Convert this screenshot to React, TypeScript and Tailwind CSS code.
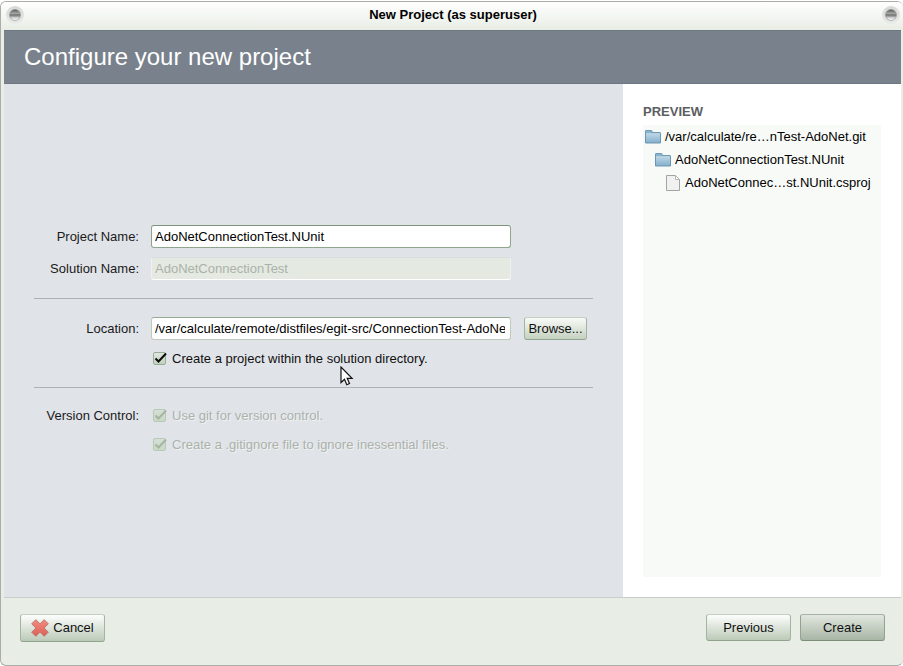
import React, { useState } from "react";

function WindowKnob({ label }: { label: string }) {
  return (
    <button type="button" aria-label={label} className="size-[18px] shrink-0">
      <svg viewBox="0 0 18 18" className="size-[18px]" aria-hidden="true">
        <defs>
          <linearGradient id="knob" x1="0" y1="0" x2="0" y2="1">
            <stop offset="0" stopColor="#4a4a4a" />
            <stop offset="0.2" stopColor="#858585" />
            <stop offset="0.4" stopColor="#a8a8a8" />
            <stop offset="0.48" stopColor="#6e6e6e" />
            <stop offset="0.6" stopColor="#929292" />
            <stop offset="0.75" stopColor="#d4d4d4" />
            <stop offset="1" stopColor="#ffffff" />
          </linearGradient>
          <linearGradient id="knobRing" x1="0" y1="0" x2="0" y2="1">
            <stop offset="0" stopColor="#d6d8d5" />
            <stop offset="1" stopColor="#e9ebe8" />
          </linearGradient>
        </defs>
        <circle cx="9" cy="9" r="9" fill="url(#knobRing)" />
        <circle cx="9" cy="9" r="5.5" fill="url(#knob)" stroke="#8c8c8c" strokeOpacity="0.6" />
      </svg>
    </button>
  );
}

function FolderIcon() {
  return (
    <svg viewBox="0 0 16 16" className="size-4 shrink-0" aria-hidden="true">
      <defs>
        <linearGradient id="folder" x1="0" y1="0" x2="0" y2="1">
          <stop offset="0" stopColor="#bdd7e7" />
          <stop offset="1" stopColor="#83aecb" />
        </linearGradient>
      </defs>
      <path d="M.5 5V2q0-.5.5-.5h5.500q.5 0 .5.5v1.500H15q.5 0 .5.5v1z" fill="#8db3cc" stroke="#6f9ab6" />
      <path d="M.5 4.500h15v9.500H.5z" fill="url(#folder)" stroke="#6c97b4" />
      <path d="M1 4.500h14" stroke="#b4cfe0" />
    </svg>
  );
}

function FileIcon() {
  return (
    <svg viewBox="0 0 16 16" className="size-4 shrink-0" aria-hidden="true">
      <path d="M1.500.5h9l4 4v11h-13z" fill="#f1f1f1" stroke="#a3a3a3" />
      <path d="M10.500.5v4h4z" fill="#ffffff" stroke="#b4b4b4" />
    </svg>
  );
}

function CrossIcon() {
  return (
    <svg viewBox="0 0 18 18" className="size-[18px] shrink-0" aria-hidden="true">
      <defs>
        <linearGradient id="cross" x1="0" y1="0" x2="0" y2="1">
          <stop offset="0" stopColor="#f58c82" />
          <stop offset="1" stopColor="#dc5f57" />
        </linearGradient>
      </defs>
      <path
        d="M4.800.7 9 4.800 13.200.7 17.300 4.800 13.100 9 17.300 13.200 13.200 17.300 9 13.200 4.800 17.300.7 13.200 4.900 9 .7 4.800z"
        fill="url(#cross)"
        stroke="#b9776c"
        strokeWidth="1"
        strokeLinejoin="round"
      />
    </svg>
  );
}

function Pointer() {
  return (
    <svg
      viewBox="0 0 14 21"
      className="pointer-events-none absolute top-[17px] left-[189px] h-[21px] w-3.5"
      aria-hidden="true"
    >
      <path
        d="M1 1v15.500l3.500-3.300 2.300 5.500 2.700-1.200-2.300-5.200h4.900z"
        fill="#ffffff"
        stroke="#111111"
        strokeWidth="1.200"
      />
    </svg>
  );
}

function Check({ id, label, disabled = false }: { id: string; label: string; disabled?: boolean }) {
  const [on, setOn] = useState(true);
  return (
    <div className="flex h-[19px] items-center gap-1.5 pl-0.5">
      <span className="grid">
        <input
          id={id}
          type="checkbox"
          checked={on}
          disabled={disabled}
          onChange={(e) => setOn(e.target.checked)}
          className="col-start-1 row-start-1 size-[13px] appearance-none rounded-[2px] border border-[#9aab98] bg-linear-to-b from-[#dfe7dc] to-[#c3d2bf] disabled:border-[#b9c9b8] disabled:from-[#d6dfd6] disabled:to-[#c9d8c6]"
        />
        {on && (
          <svg
            viewBox="0 0 13 13"
            className={`pointer-events-none col-start-1 row-start-1 size-[13px] overflow-visible ${disabled ? "text-[#a5b5a1]" : "text-[#0c0c0c]"}`}
            aria-hidden="true"
          >
            <path d="M2.500 6.500 5.500 9.500 13 1.500" fill="none" stroke="currentColor" strokeWidth="2" />
          </svg>
        )}
      </span>
      <label
        htmlFor={id}
        className={disabled ? "text-[#abb2ac] [text-shadow:1px_1px_0_#eff2f1]" : "text-[#101010]"}
      >
        {label}
      </label>
    </div>
  );
}

const field =
  "h-[23px] w-[360px] min-w-0 rounded-[3px] border bg-white pl-[3px] pr-[5px] text-black outline-none";
const button =
  "flex items-center justify-center rounded-[3px] border border-[#a3b5a1] border-t-[#c3cfc0] border-b-[#8fa38d] bg-linear-to-b text-[#111111]";

export default function App() {
  const [name, setName] = useState("AdoNetConnectionTest.NUnit");
  const [location, setLocation] = useState(
    "/var/calculate/remote/distfiles/egit-src/ConnectionTest-AdoNet.git",
  );

  return (
    <div className="flex h-screen flex-col overflow-hidden bg-white pt-px font-['Liberation_Sans',Arial,sans-serif] text-[13px] leading-4 text-[#1a1a1a]">
      <div className="flex min-h-0 flex-1 flex-col overflow-hidden rounded-[6px] border border-r-0 border-[#acadab] bg-[#e8ede5] pr-0.5 pl-[3px]">
        <header className="-mr-0.5 -ml-[3px] flex h-7 shrink-0 items-center justify-between bg-linear-to-b from-white to-[#e8ede5] pr-[3px] pb-0.5 pl-[5px]">
          <WindowKnob label="Window menu" />
          <h1 className="font-bold text-black">New Project (as superuser)</h1>
          <WindowKnob label="Close window" />
        </header>

        <div className="flex h-[54px] shrink-0 items-center border-y border-[#6c7781] bg-[#79828c] px-5">
          <h2 className="text-2xl text-white">Configure your new project</h2>
        </div>

        <main className="flex min-h-0 flex-1 border-b border-[#c9cec9]">
          <form
            className="flex min-w-0 flex-1 flex-col justify-center bg-[#e0e3e8] px-[30px] pb-0.5"
            onSubmit={(e) => e.preventDefault()}
          >
            <div className="grid grid-cols-[105px_1fr] items-center gap-x-3 gap-y-[9px] pb-[18px]">
              <label htmlFor="project" className="text-right">Project Name:</label>
              <input
                id="project"
                value={name}
                onChange={(e) => setName(e.target.value)}
                className={`${field} border-[#8fa58c] border-t-[#7f957b]`}
              />
              <label htmlFor="solution" className="text-right">Solution Name:</label>
              <input
                id="solution"
                value="AdoNetConnectionTest"
                disabled
                className="h-[23px] w-[360px] min-w-0 rounded-[3px] border border-[#eef1f0] border-t-[#d7dcdc] border-b-white bg-[#e4e9e1] px-[3px] text-[#abb2aa]"
              />
            </div>

            <div className="grid grid-cols-[105px_1fr] items-center gap-x-3 gap-y-[9px] border-t border-[#adb1b6] pt-[18px] pb-[19px]">
              <label htmlFor="location" className="text-right">Location:</label>
              <div className="flex gap-[13px]">
                <input
                  id="location"
                  value={location}
                  onChange={(e) => setLocation(e.target.value)}
                  className={`${field} border-[#c0cbbd] border-t-[#97a894]`}
                />
                <button type="button" className={`${button} h-[23px] w-[63px] shrink-0 from-[#f9fbf8] to-[#c4d1c0]`}>
                  Browse...
                </button>
              </div>
              <div className="relative col-start-2">
                <Check id="within" label="Create a project within the solution directory." />
                <Pointer />
              </div>
            </div>

            <div className="grid grid-cols-[105px_1fr] items-center gap-x-3 gap-y-2.5 border-t border-[#adb1b6] pt-[18px]">
              <span className="text-right">Version Control:</span>
              <Check id="git" label="Use git for version control." disabled />
              <div className="col-start-2">
                <Check id="ignore" label="Create a .gitignore file to ignore inessential files." disabled />
              </div>
            </div>
          </form>

          <aside className="flex w-[278px] shrink-0 flex-col bg-white p-5">
            <h3 className="pb-[5px] font-bold text-[#5b5e61]">PREVIEW</h3>
            <ul className="flex-1 bg-[#f8faf7] px-0.5 text-black">
              <li className="flex h-[23px] items-center gap-1">
                <FolderIcon />
                /var/calculate/re…nTest-AdoNet.git
              </li>
              <li className="flex h-[23px] items-center gap-1 pl-2.5">
                <FolderIcon />
                AdoNetConnectionTest.NUnit
              </li>
              <li className="flex h-[23px] items-center gap-1 pl-5">
                <FileIcon />
                AdoNetConnec…st.NUnit.csproj
              </li>
            </ul>
          </aside>
        </main>

        <footer className="flex h-[67px] shrink-0 items-start gap-[9px] px-4 pt-4">
          <button type="button" className={`${button} mr-auto h-7 w-[85px] gap-1 from-[#fdfefd] to-[#bccab8]`}>
            <CrossIcon />
            Cancel
          </button>
          <button type="button" className={`${button} h-[27px] w-[85px] from-[#fdfefd] to-[#bccab8]`}>
            Previous
          </button>
          <button
            type="button"
            className="flex h-[27px] w-[85px] items-center justify-center rounded-[3px] border border-[#93a291] border-t-[#a6b2a4] border-b-[#7d8f7b] bg-linear-to-b from-[#e2e7e0] to-[#a8b6a5] text-[#111111]"
          >
            Create
          </button>
        </footer>
      </div>
    </div>
  );
}
